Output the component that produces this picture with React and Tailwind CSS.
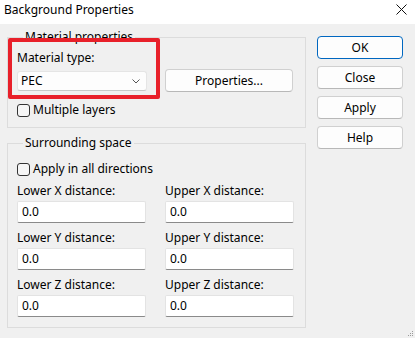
import React from "react";

const Check = ({ label }) => (
	<div className="flex items-center h-[16px] gap-[3px]">
		<div className="w-[13px] h-[13px] rounded-[3px] border border-[#333333] bg-[#f6f6f6]"></div>
		<span>{label}</span>
	</div>
);

const Field = ({ label, value }) => (
	<div className="flex flex-col w-[129px]">
		<span className="h-[16px] leading-[16px]">{label}</span>
		<div className="mt-[2px] h-[22px] bg-white border border-[#e3e3e3] border-b-[#8a8a8a] rounded-[2px] flex items-center pl-[4px]">
			{value}
		</div>
	</div>
);

const Btn = ({ children, primary }) => (
	<button
		className={
			primary
				? "w-[86px] h-[23px] rounded-[4px] bg-[#fdfdfd] border border-[#0067c0] flex items-center justify-center"
				: "w-[86px] h-[23px] rounded-[4px] bg-[#fdfdfd] border border-[#d0d0d0] border-b-[#b8b8b8] flex items-center justify-center"
		}
	>
		{children}
	</button>
);

export default function App() {
	return (
		<div className="relative w-[415px] h-[338px] overflow-hidden bg-[#f0f0f0] text-black text-[12px] leading-[16px] font-['Noto_Sans',sans-serif]">
			{/* title bar */}
			<div className="h-[24px] bg-white flex items-center justify-between pl-[4px] pr-[8px]">
				<span className="text-[12px] -mt-[4px]">Background Properties</span>
				<svg width="11" height="11" viewBox="0 0 11 11" className="-mt-[6px]">
					<path d="M0.5 0.5 L10.5 10.5 M10.5 0.5 L0.5 10.5" stroke="#111" strokeWidth="1" />
				</svg>
			</div>

			<div className="flex pl-[7px] pt-[5px]">
				{/* left column */}
				<div className="w-[299px] flex flex-col">
					<fieldset className="border border-[#dcdcdc] px-[9px] pt-[5px] pb-[9px]">
						<legend className="ml-[6px] px-[2px] leading-[16px]">Material properties</legend>
						<div className="flex items-end">
							<div className="flex flex-col w-[130px]">
								<span className="h-[16px]">Material type:</span>
								<div className="mt-[5px] h-[20px] bg-[#fdfdfd] border border-[#e5e5e5] border-b-[#c8c8c8] rounded-[3px] flex items-center justify-between pl-[3px] pr-[6px]">
									<span>PEC</span>
									<svg width="8" height="5" viewBox="0 0 8 5">
										<path d="M0.5 0.5 L4 4 L7.5 0.5" fill="none" stroke="#555" strokeWidth="1" />
									</svg>
								</div>
							</div>
							<button className="ml-[18px] -mb-[1px] w-[128px] h-[23px] rounded-[4px] bg-[#fdfdfd] border border-[#d0d0d0] border-b-[#b8b8b8] flex items-center justify-center">
								Properties...
							</button>
						</div>
						<div className="mt-[11px]">
							<Check label="Multiple layers" />
						</div>
					</fieldset>

					<fieldset className="mt-[7px] border border-[#dcdcdc] px-[9px] pt-[10px] pb-[10px]">
						<legend className="ml-[6px] px-[2px] leading-[16px]">Surrounding space</legend>
						<Check label="Apply in all directions" />
						<div className="mt-[6px] grid grid-cols-[129px_128px] gap-x-[19px] gap-y-[7px]">
							<Field label="Lower X distance:" value="0.0" />
							<Field label="Upper X distance:" value="0.0" />
							<Field label="Lower Y distance:" value="0.0" />
							<Field label="Upper Y distance:" value="0.0" />
							<Field label="Lower Z distance:" value="0.0" />
							<Field label="Upper Z distance:" value="0.0" />
						</div>
					</fieldset>
				</div>

				{/* right buttons */}
				<div className="ml-[11px] mt-[7px] flex flex-col gap-[7px]">
					<Btn primary>OK</Btn>
					<Btn>Close</Btn>
					<Btn>Apply</Btn>
					<Btn>Help</Btn>
				</div>
			</div>

			{/* annotation */}
			<div className="absolute left-[8px] top-[38px] w-[152px] h-[61px] border-4 border-[#e8202a] rounded-[2px]"></div>

			{/* resize grip */}
			<svg width="6" height="6" viewBox="0 0 6 6" className="absolute right-[1px] bottom-[1px]">
				<rect x="4" y="0" width="1" height="1" fill="#9a9a9a" />
				<rect x="2" y="2" width="1" height="1" fill="#9a9a9a" />
				<rect x="4" y="2" width="1" height="1" fill="#9a9a9a" />
				<rect x="0" y="4" width="1" height="1" fill="#9a9a9a" />
				<rect x="2" y="4" width="1" height="1" fill="#9a9a9a" />
				<rect x="4" y="4" width="1" height="1" fill="#9a9a9a" />
			</svg>
		</div>
	);
}
